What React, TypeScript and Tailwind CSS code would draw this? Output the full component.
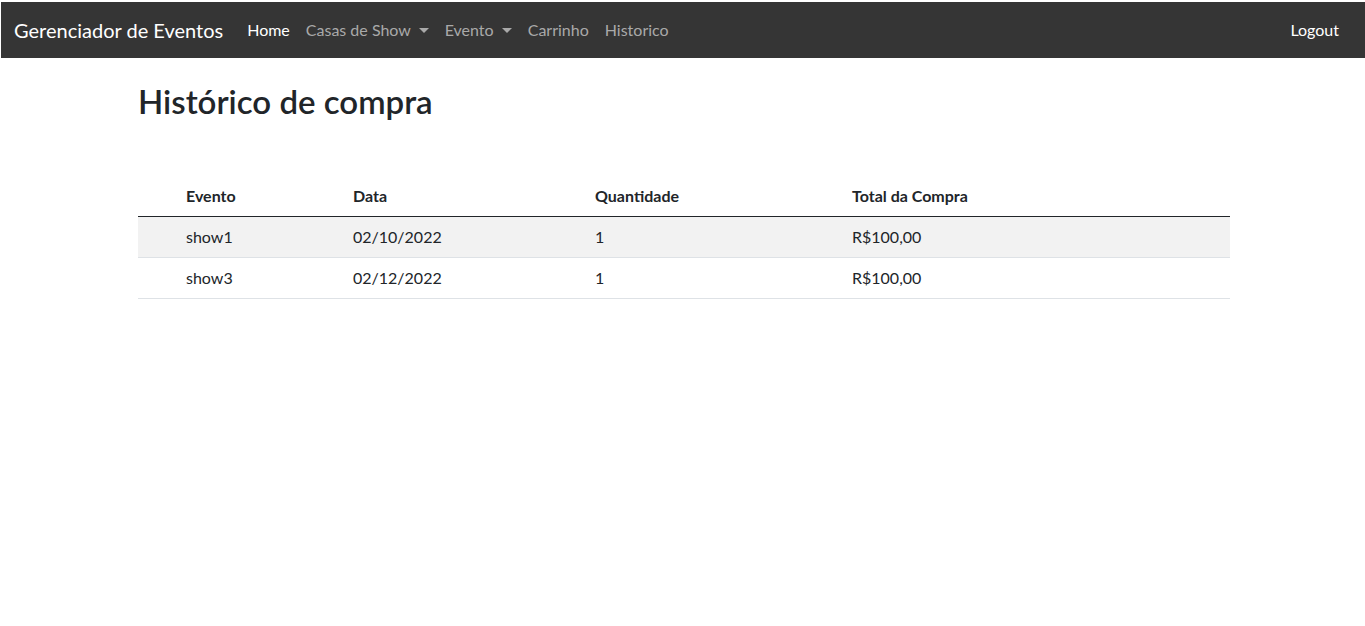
import React from 'react';

interface Compra {
  evento: string;
  data: string;
  quantidade: number;
  total: string;
}

const compras: Compra[] = [
  { evento: 'show1', data: '02/10/2022', quantidade: 1, total: 'R$100,00' },
  { evento: 'show3', data: '02/12/2022', quantidade: 1, total: 'R$100,00' },
];

const Caret = () => (
  <span className="ml-[4px] inline-block align-[3px] border-x-[5px] border-t-[5px] border-x-transparent border-t-current" />
);

const Navbar = () => (
  <nav className="flex h-[56px] items-center bg-[#353535] pl-[13px] pr-[18px]">
    <span className="mr-[16px] text-[20px] text-white">Gerenciador de Eventos</span>
    <ul className="flex items-center text-[16px]">
      <li className="px-2 text-white">Home</li>
      <li className="px-2 text-[#a9a9a9]">
        Casas de Show <Caret />
      </li>
      <li className="px-2 text-[#a9a9a9]">
        Evento <Caret />
      </li>
      <li className="px-2 text-[#a9a9a9]">Carrinho</li>
      <li className="px-2 text-[#a9a9a9]">Historico</li>
    </ul>
    <span className="ml-auto px-2 text-[16px] text-white">Logout</span>
  </nav>
);

const App = () => {
  return (
    <div className="min-h-[626px] bg-white pt-[2px] pl-[1px] font-['Lato',sans-serif] text-[#212529]">
      <Navbar />
      <main className="ml-[137px] w-[1092px]">
        <h1 className="mt-[24px] text-[33px] font-semibold leading-[1.2]">Histórico de compra</h1>

        <div className="mt-[54px] text-[16px]">
          <div className="grid grid-cols-[40px_167px_242px_257px_1fr] border-b border-[#212529] font-bold">
            <div />
            <div className="px-2 py-2 leading-6">Evento</div>
            <div className="px-2 py-2 leading-6">Data</div>
            <div className="px-2 py-2 leading-6">Quantidade</div>
            <div className="px-2 py-2 leading-6">Total da Compra</div>
          </div>
          {compras.map((c, i) => (
            <div
              key={c.evento}
              className={`grid grid-cols-[40px_167px_242px_257px_1fr] border-b border-[#dee2e6] ${
                i % 2 === 0 ? 'bg-[#f2f2f2]' : 'bg-white'
              }`}
            >
              <div />
              <div className="px-2 py-2 leading-6">{c.evento}</div>
              <div className="px-2 py-2 leading-6">{c.data}</div>
              <div className="px-2 py-2 leading-6">{c.quantidade}</div>
              <div className="px-2 py-2 leading-6">{c.total}</div>
            </div>
          ))}
        </div>
      </main>
    </div>
  );
};

export default App;
